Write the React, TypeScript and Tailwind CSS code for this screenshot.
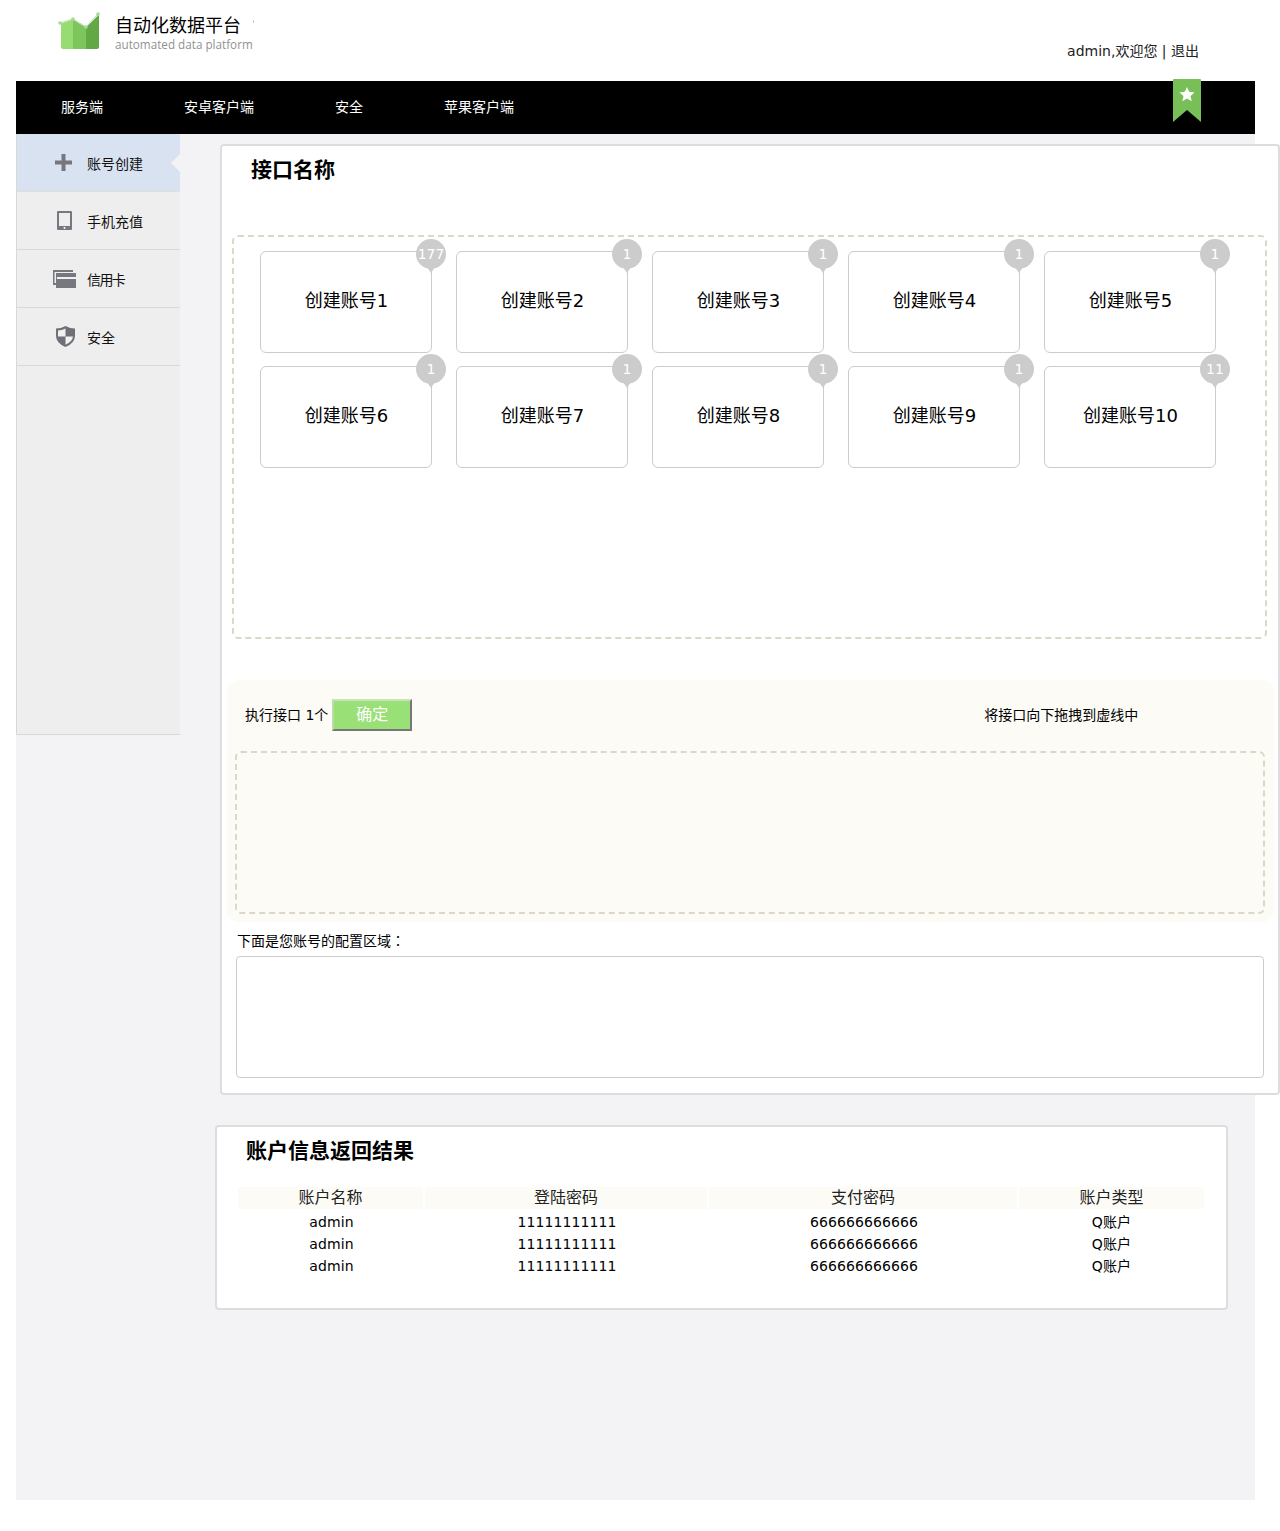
const font = { fontFamily: '"DejaVu Sans", "Noto Sans CJK SC", sans-serif' };

const navItems = ['服务端', '安卓客户端', '安全', '苹果客户端'];

const apiCards = [
  { name: '创建账号1', count: 177 },
  { name: '创建账号2', count: 1 },
  { name: '创建账号3', count: 1 },
  { name: '创建账号4', count: 1 },
  { name: '创建账号5', count: 1 },
  { name: '创建账号6', count: 1 },
  { name: '创建账号7', count: 1 },
  { name: '创建账号8', count: 1 },
  { name: '创建账号9', count: 1 },
  { name: '创建账号10', count: 11 },
];

const accounts = [
  { name: 'admin', login: '11111111111', pay: '666666666666', type: 'Q账户' },
  { name: 'admin', login: '11111111111', pay: '666666666666', type: 'Q账户' },
  { name: 'admin', login: '11111111111', pay: '666666666666', type: 'Q账户' },
];

function Logo() {
  return (
    <svg width="44" height="40" viewBox="0 0 44 40" className="shrink-0">
      <path d="M3 12.5 L15 8.5 L15 38 L5 38 Q3 38 3 36 Z" fill="#96dc72" />
      <path d="M15 8.5 L28 16.5 L28 38 L15 38 Z" fill="#7cc65c" />
      <path d="M28 16.5 L41 3.5 L41 36 Q41 38 39 38 L28 38 Z" fill="#62a845" />
      <path d="M2 12 L15 8 L28 16 L40 3" fill="none" stroke="#b4dca6" strokeWidth="1" />
      <circle cx="2" cy="12" r="1.8" fill="#a8d998" />
      <circle cx="15" cy="8" r="1.8" fill="#a8d998" />
      <circle cx="28" cy="16" r="1.8" fill="#a8d998" />
      <circle cx="40" cy="3" r="1.8" fill="#a8d998" />
    </svg>
  );
}

function Bookmark() {
  return (
    <svg width="28" height="43" viewBox="0 0 28 43" className="absolute top-[-2px] left-[1157px]">
      <path d="M0 1 Q0 0 1 0 L27 0 Q28 0 28 1 L28 43 L14 31 L0 43 Z" fill="#78bf57" />
      <path d="M14 8 L16.2 12.8 L21.5 13.4 L17.5 17 L18.7 22.2 L14 19.5 L9.3 22.2 L10.5 17 L6.5 13.4 L11.8 12.8 Z" fill="#fff" />
    </svg>
  );
}

function PlusIcon() {
  return (
    <svg width="17" height="17" viewBox="0 0 17 17" className="mr-[2px]">
      <path d="M6.5 0 h4 v6.5 h6.5 v4 h-6.5 v6.5 h-4 v-6.5 h-6.5 v-4 h6.5 z" fill="#77777f" />
    </svg>
  );
}

function TabletIcon() {
  return (
    <svg width="15" height="19" viewBox="0 0 15 19">
      <path
        fillRule="evenodd"
        d="M1 0 L14 0 Q15 0 15 1 L15 18 Q15 19 14 19 L1 19 Q0 19 0 18 L0 1 Q0 0 1 0 Z M2 2 L2 15 L13 15 L13 2 Z"
        fill="#77777f"
      />
      <circle cx="7.5" cy="17" r="1" fill="#fff" />
    </svg>
  );
}

function CardsIcon() {
  return (
    <svg width="23" height="18" viewBox="0 0 23 18">
      <path d="M0 0 L20 0 L20 2 L1.5 2 L1.5 13 L3 13 L3 15 L0 15 Z" fill="#77777f" />
      <path d="M3 3 L23 3 L23 18 L3 18 Z" fill="#77777f" />
      <path d="M4 7 L23 7 L23 9 L4 9 Z" fill="#f0f0f0" />
    </svg>
  );
}

function ShieldIcon() {
  return (
    <svg width="19" height="21" viewBox="0 0 19 21" className="ml-[2px]">
      <path d="M9.5 0 Q14 2.5 19 2.5 L19 10 Q19 17 9.5 21 Q0 17 0 10 L0 2.5 Q5 2.5 9.5 0 Z" fill="#6f6f77" />
      <path d="M9.5 2.5 L9.5 10.5 L2 10.5 L2 4.5 Q6 4.5 9.5 2.5 Z" fill="#f0f0f0" />
      <path d="M9.5 10.5 L17 10.5 Q16.5 15.5 9.5 18.8 Z" fill="#f0f0f0" />
    </svg>
  );
}

function SideItem({
  icon,
  label,
  active,
  tight,
}: {
  icon: React.ReactNode;
  label: string;
  active?: boolean;
  tight?: boolean;
}) {
  return (
    <div
      className={
        active
          ? 'relative flex h-[58px] items-center bg-[#d8e2f0] border-b-2 border-[#dcdfe3]'
          : 'flex h-[58px] items-center border-b border-[#d8d8d8]'
      }
    >
      <div className="flex w-[70px] justify-center pl-[26px] pr-[1px]">{icon}</div>
      <span className={tight ? 'mt-[4px] text-[14px] tracking-[-1.6px] text-[#111]' : 'mt-[4px] text-[14px] text-[#111]'}>
        {label}
      </span>
      {active && (
        <div className="absolute right-0 top-[20px] h-0 w-0 border-y-[9px] border-r-[9px] border-y-transparent border-r-[#f3f3f6]" />
      )}
    </div>
  );
}

function ApiCard({ name, count }: { name: string; count: number }) {
  return (
    <div className="relative flex h-[102px] w-[172px] items-center justify-center rounded-[6px] border border-[#cccccc] bg-white pb-[4px] pl-[1px] text-[18px] text-black">
      {name}
      <div className="absolute right-[-15px] top-[-13px] flex h-[30px] w-[30px] items-center justify-center rounded-full bg-[#cccccc] text-[14px] text-white">
        {count}
        <div className="absolute bottom-[-4px] left-[11px] h-0 w-0 border-x-[4px] border-t-[6px] border-x-transparent border-t-[#cccccc]" />
      </div>
    </div>
  );
}

export default function App() {
  return (
    <div className="h-[1531px] w-[1280px] overflow-hidden bg-white text-black" style={font}>
      {/* Header */}
      <header className="flex h-[81px]">
        <div className="ml-[58px] mt-[11px] flex h-[40px]">
          <Logo />
          <div className="ml-[13px]">
            <div className="mt-[3px] text-[18px] leading-[24px]">自动化数据平台</div>
            <div
              className="text-[11.7px] leading-[13px] text-[#929292]"
              style={{ fontFamily: '"Open Sans", sans-serif' }}
            >
              automated data platform
            </div>
          </div>
          <div className="mt-[9px] h-[3px] w-[1px] bg-[#cccccc]" />
        </div>
        <div className="ml-auto mr-[81px] mt-[41px] text-[14px] leading-[20px] text-[#222]">admin,欢迎您 | 退出</div>
      </header>

      <div className="h-[1419px] w-[1239px] ml-[16px] bg-[#f3f3f6]">
        {/* Top nav */}
        <nav className="relative flex h-[53px] items-center gap-[81px] bg-black pl-[45px] text-[14px] text-white">
          {navItems.map((item) => (
            <span key={item}>{item}</span>
          ))}
          <Bookmark />
        </nav>

        <div className="flex items-start">
          {/* Sidebar */}
          <aside className="h-[601px] w-[164px] shrink-0 border-b border-l border-[#d8d8d8] bg-[#eeeeee]">
            <SideItem active icon={<PlusIcon />} label="账号创建" />
            <SideItem icon={<TabletIcon />} label="手机充值" />
            <SideItem icon={<CardsIcon />} label="信用卡" tight />
            <SideItem icon={<ShieldIcon />} label="安全" />
          </aside>

          <main className="ml-[35px] mt-[10px] w-[1065px] shrink-0">
            {/* Interface panel */}
            <section className="ml-[5px] h-[951px] w-[1060px] rounded-[4px] border-2 border-[#dddddf] bg-white">
              <h2 className="ml-[29px] mt-[10px] text-[21px] font-bold leading-[28px]">接口名称</h2>

              <div className="ml-[10px] mt-[51px] h-[404px] w-[1035px] rounded-[6px] border-2 border-dashed border-[#d9d9c6] pl-[26px] pt-[14px]">
                <div className="grid grid-cols-[repeat(5,172px)] gap-x-[24px] gap-y-[13px]">
                  {apiCards.map((card) => (
                    <ApiCard key={card.name} name={card.name} count={card.count} />
                  ))}
                </div>
              </div>

              <div className="ml-[5px] mt-[41px] h-[242px] w-[1047px] rounded-[12px] bg-[#fcfbf6]">
                <div className="flex h-[71px] items-center pl-[18px] pb-[2px] text-[14px]">
                  <span className="mt-[2px]">执行接口 1个</span>
                  <button className="ml-[4px] h-[32px] w-[80px] border-2 border-b-[#777] border-l-[#bcdcaa] border-r-[#777] border-t-[#c9e3bb] bg-[#99e077] text-[16px] text-white">
                    确定
                  </button>
                  <span className="ml-[572px] mt-[2px]">将接口向下拖拽到虚线中</span>
                </div>
                <div className="ml-[8px] h-[163px] w-[1030px] rounded-[6px] border-2 border-dashed border-[#d9d9c6]" />
              </div>

              <p className="ml-[15px] mt-[8px] h-[21px] text-[14px] leading-[20px]">
                下面是您账号的配置区域
                <span style={{ fontFamily: '"Noto Sans CJK TC", sans-serif' }}>：</span>
              </p>
              <div className="ml-[14px] mt-[5px] h-[122px] w-[1028px] rounded-[4px] border border-[#cccccc] bg-white" />
            </section>

            {/* Results */}
            <section className="mt-[30px] h-[185px] w-[1013px] rounded-[4px] border-2 border-[#dddddf] bg-white">
              <h2 className="ml-[29px] mt-[10px] text-[21px] font-bold leading-[28px]">账户信息返回结果</h2>
              <table className="ml-[21px] mt-[22px] w-[966px] table-fixed border-separate border-spacing-0 text-center">
                <colgroup>
                  <col className="w-[187px]" />
                  <col className="w-[284px]" />
                  <col className="w-[310px]" />
                  <col className="w-[185px]" />
                </colgroup>
                <thead>
                  <tr className="text-[16px] leading-[20px] text-[#222]">
                    <th className="border-b-2 border-r-2 border-white bg-[#fcfbf6] py-[1px] font-normal">账户名称</th>
                    <th className="border-b-2 border-r-2 border-white bg-[#fcfbf6] py-[1px] font-normal">登陆密码</th>
                    <th className="border-b-2 border-r-2 border-white bg-[#fcfbf6] py-[1px] font-normal">支付密码</th>
                    <th className="border-b-2 border-white bg-[#fcfbf6] py-[1px] font-normal">账户类型</th>
                  </tr>
                </thead>
                <tbody className="text-[14px] tracking-[0.1px]">
                  {accounts.map((row, i) => (
                    <tr key={i} className="h-[22px]">
                      <td>{row.name}</td>
                      <td>{row.login}</td>
                      <td>{row.pay}</td>
                      <td>{row.type}</td>
                    </tr>
                  ))}
                </tbody>
              </table>
            </section>
          </main>
        </div>
      </div>
    </div>
  );
}
